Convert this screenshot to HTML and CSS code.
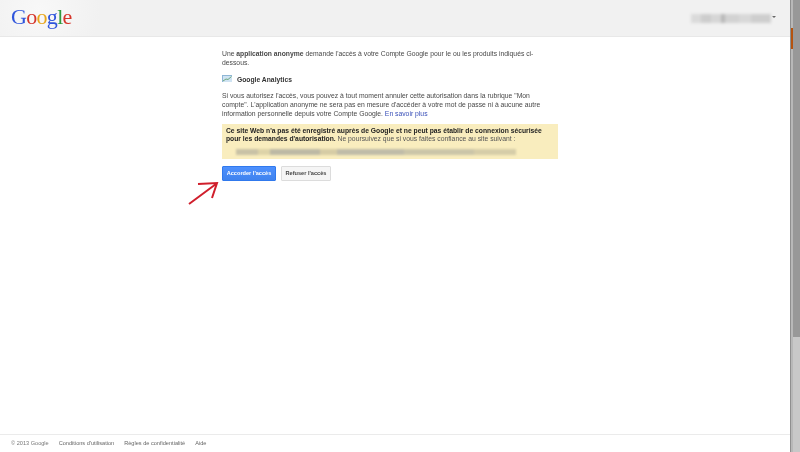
FILE: index.html
```html
<!DOCTYPE html>
<html lang="fr">
<head>
<meta charset="utf-8">
<title>Demande d'autorisation</title>
<link rel="stylesheet" href="styles.css">
</head>
<body>
<div class="window">
  <div class="page">
    <header class="topbar">
      <div class="logo"><span class="blue">G</span><span class="red">o</span><span class="yellow">o</span><span class="blue">g</span><span class="green">l</span><span class="red">e</span></div>
      <div class="account"><span class="account-name"></span><span class="caret"></span></div>
    </header>
    <main class="main">
      <div class="content">
        <p class="intro">Une <b>application anonyme</b> demande l'accès à votre Compte Google pour le ou les produits indiqués ci-dessous.</p>
        <div class="product">
          <svg class="product-icon" width="10" height="8" viewBox="0 0 10 8"><rect x="0" y="0" width="10" height="7" fill="#cfe3f2"/><path d="M0 .5H10M.5 0V7" stroke="#8fb6d6" stroke-width="1"/><path d="M1 6L4 4L6 4.5L9.5 1.5" stroke="#6fa87f" stroke-width="1" fill="none"/></svg>
          <b>Google Analytics</b>
        </div>
        <p class="details">Si vous autorisez l'accès, vous pouvez à tout moment annuler cette autorisation dans la rubrique "Mon compte". L'application anonyme ne sera pas en mesure d'accéder à votre mot de passe ni à aucune autre information personnelle depuis votre Compte Google. <a href="#">En savoir plus</a></p>
        <div class="warning">
          <p><b>Ce site Web n'a pas été enregistré auprès de Google et ne peut pas établir de connexion sécurisée pour les demandes d'autorisation.</b> Ne poursuivez que si vous faites confiance au site suivant :</p>
          <div class="site-url"></div>
        </div>
        <div class="actions">
          <button class="btn btn-primary">Accorder l'accès</button>
          <button class="btn btn-default">Refuser l'accès</button>
          <svg class="arrow" width="34" height="26" viewBox="0 0 34 26"><path d="M2 24L29 4M11 4L30 3L25 18" fill="none" stroke="#d01f2c" stroke-width="2"/></svg>
        </div>
      </div>
    </main>
    <footer class="footer">
      <span>© 2013 Google</span>
      <a href="#">Conditions d'utilisation</a>
      <a href="#">Règles de confidentialité</a>
      <a href="#">Aide</a>
    </footer>
  </div>
  <div class="scrollbar">
    <div class="scroll-thumb"></div>
    <div class="scroll-mark"></div>
  </div>
</div>
</body>
</html>
```
FILE: styles.css
```css
* { box-sizing: border-box; }
html, body { margin: 0; padding: 0; height: 100%; }
body { font-family: "Liberation Sans", Arial, sans-serif; font-size: 6.8px; line-height: 9px; color: #484848; background: #fff; overflow: hidden; }
b { font-size: 6.75px; }
p { margin: 0; }
.window { display: flex; width: 800px; height: 452px; }
.page { flex: 1; display: flex; flex-direction: column; min-width: 0; filter: blur(0.35px); }

.topbar { height: 37px; flex: none; display: flex; justify-content: space-between; align-items: flex-start; padding: 0 14px 0 11px; background: radial-gradient(circle at 40px 10px, #f8f8f8, #f1f1f1 60px); border-bottom: 1px solid #e8e8e8; }
.logo { font-family: "Liberation Serif", serif; font-size: 22px; line-height: 24px; letter-spacing: -0.7px; margin-top: 5px; }
.blue { color: #2f55dc; }
.red { color: #d5352a; }
.yellow { color: #e8a61c; }
.green { color: #2f9a3f; }
.account { display: flex; align-items: flex-start; margin-top: 14px; }
.account-name { display: block; width: 80px; height: 9px; filter: blur(1.4px); background: linear-gradient(90deg, #dadada 0 12%, #cdcdcd 12% 25%, #d6d6d6 25% 38%, #b8b8b8 38% 42%, #d2d2d2 42% 60%, #d8d8d8 60% 75%, #cecece 75% 100%); }
.caret { width: 0; height: 0; margin: 2px 0 0 1px; border: 2px solid transparent; border-top-color: #666; border-bottom: 0; }

.main { flex: 1; display: flex; justify-content: center; padding: 12px 0 0 0; }
.content { width: 336px; margin-left: -10px; }
.intro { width: 320px; }
.product { display: flex; align-items: center; gap: 5px; margin-top: 7px; color: #333; height: 10px; }
.product-icon { flex: none; }
.details { margin-top: 6.5px; width: 320px; }
a { color: #3a50b8; text-decoration: none; }

.warning { margin-top: 6.5px; height: 35px; padding: 3px 4px; background: #f9edbe; color: #555; line-height: 7.5px; }
.warning b { color: #222; }
.site-url { width: 280px; height: 6px; margin: 7px 0 0 10px; filter: blur(1px); background: linear-gradient(90deg, #c9c2a6 0 8%, #ddd3a8 8% 12%, #bdb9a5 12% 30%, #d6cca5 30% 36%, #c0bca8 36% 60%, #cbc5a8 60% 85%, #d6cda8 85% 100%); }

.actions { position: relative; display: flex; gap: 5px; margin-top: 7px; }
.btn { height: 15px; padding: 0; border-radius: 1px; font-family: inherit; font-size: 5.6px; font-weight: bold; line-height: 13px; }
.btn-primary { width: 54px; color: #fff; background: linear-gradient(#4d90fe, #4083ee); border: 1px solid #3079ed; }
.btn-default { width: 50px; color: #444; background: #f5f5f5; border: 1px solid #dcdcdc; }
.arrow { position: absolute; left: -35px; top: 14px; }

.footer { height: 18px; flex: none; display: flex; gap: 10px; align-items: center; padding-left: 11px; border-top: 1px solid #ebebeb; font-size: 5.6px; color: #777; }
.footer a { color: #666; }

.scrollbar { position: relative; width: 10px; flex: none; background: linear-gradient(90deg, #8f8f8f 0 1px, #b8b8b8 1px 3px, #c8c8c8 3px 100%); }
.scroll-thumb { height: 337px; margin-left: 3px; background: #989898; }
.scroll-mark { position: absolute; left: 1px; top: 28px; width: 2px; height: 21px; background: #b5530f; }
```
